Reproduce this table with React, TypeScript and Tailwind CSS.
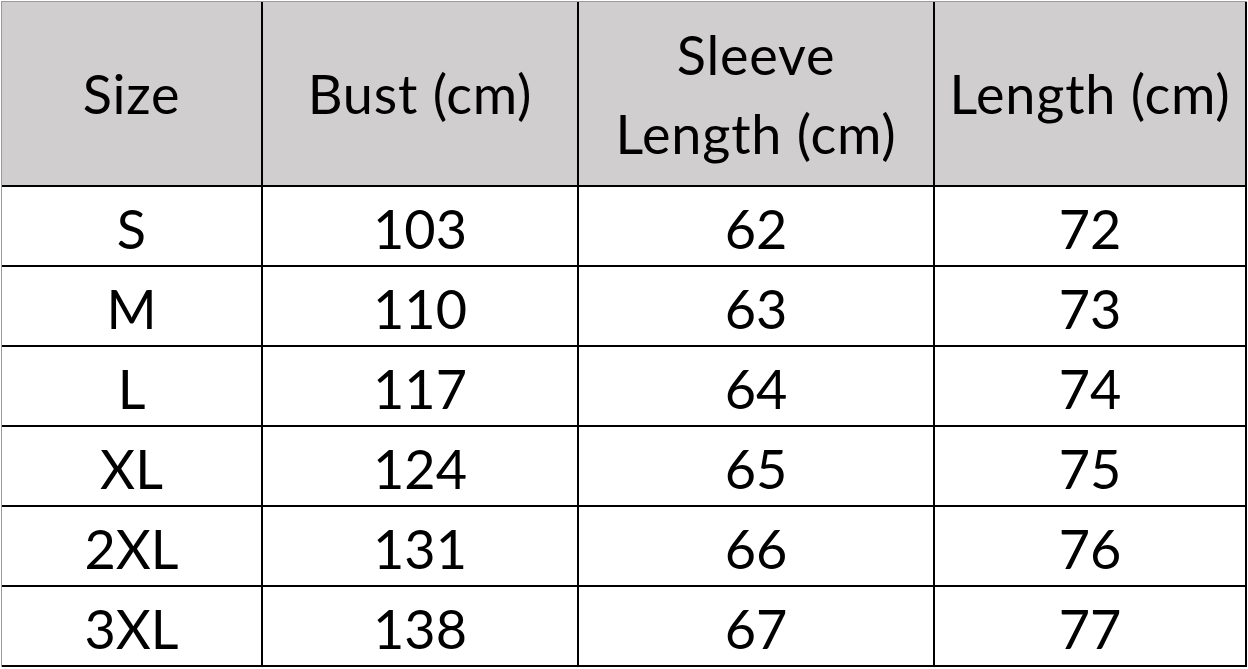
const headers = ["Size", "Bust (cm)", "Sleeve Length (cm)", "Length (cm)"];

const rows = [
  ["S", "103", "62", "72"],
  ["M", "110", "63", "73"],
  ["L", "117", "64", "74"],
  ["XL", "124", "65", "75"],
  ["2XL", "131", "66", "76"],
  ["3XL", "138", "67", "77"],
];

const widths = ["w-[261px]", "w-[316px]", "w-[356px]", "w-[312px]"];

export default function App() {
  return (
    <div className="w-[1248px] h-[669px] bg-white font-['Lato','Liberation_Sans',sans-serif] text-black">
      <div className="ml-px mt-px w-[1246px] border-l border-t border-[#9a9a9a] flex flex-col">
        <div className="flex bg-[#d0cece]">
          {headers.map((h, i) => (
            <div
              key={h}
              className={`${widths[i]} h-[185px] border-r-2 border-b-2 border-black flex items-center justify-center text-center text-[54px] leading-[79px] tracking-[0.8px] px-1`}
            >
              {i === 2 ? (
                <span>
                  Sleeve
                  <br />
                  Length (cm)
                </span>
              ) : (
                h
              )}
            </div>
          ))}
        </div>
        {rows.map((r) => (
          <div key={r[0]} className="flex">
            {r.map((c, i) => (
              <div
                key={i}
                className={`${widths[i]} h-[80px] border-r-2 border-b-2 border-black flex items-center justify-center text-[54px] pt-1`}
              >
                {c}
              </div>
            ))}
          </div>
        ))}
      </div>
    </div>
  );
}
